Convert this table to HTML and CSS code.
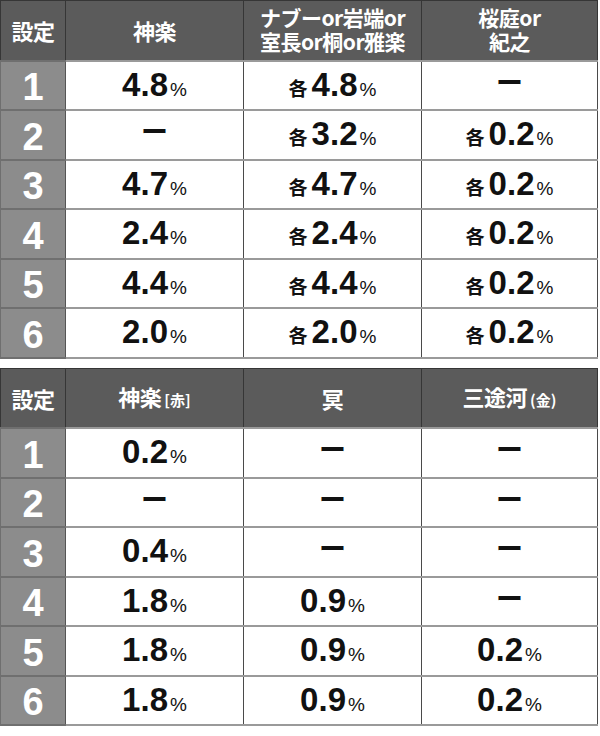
FILE: index.html
```html
<!DOCTYPE html>
<html lang="ja">
<head>
<meta charset="utf-8">
<link rel="stylesheet" href="styles.css">
</head>
<body>
<div class="page">
<table class="tbl">
  <colgroup><col class="c0"><col class="c1"><col class="c2"><col class="c3"></colgroup>
  <thead>
    <tr><th>設定</th><th>神楽</th><th class="two">ナブーor岩端or<br>室長or桐or雅楽</th><th class="two">桜庭or<br>紀之</th></tr>
  </thead>
  <tbody>
    <tr><th>1</th><td><span class="n">4.8</span><span class="p">%</span></td><td><span class="k">各</span><span class="n">4.8</span><span class="p">%</span></td><td><span class="dash">ー</span></td></tr>
    <tr><th>2</th><td><span class="dash">ー</span></td><td><span class="k">各</span><span class="n">3.2</span><span class="p">%</span></td><td><span class="k">各</span><span class="n">0.2</span><span class="p">%</span></td></tr>
    <tr><th>3</th><td><span class="n">4.7</span><span class="p">%</span></td><td><span class="k">各</span><span class="n">4.7</span><span class="p">%</span></td><td><span class="k">各</span><span class="n">0.2</span><span class="p">%</span></td></tr>
    <tr><th>4</th><td><span class="n">2.4</span><span class="p">%</span></td><td><span class="k">各</span><span class="n">2.4</span><span class="p">%</span></td><td><span class="k">各</span><span class="n">0.2</span><span class="p">%</span></td></tr>
    <tr><th>5</th><td><span class="n">4.4</span><span class="p">%</span></td><td><span class="k">各</span><span class="n">4.4</span><span class="p">%</span></td><td><span class="k">各</span><span class="n">0.2</span><span class="p">%</span></td></tr>
    <tr><th>6</th><td><span class="n">2.0</span><span class="p">%</span></td><td><span class="k">各</span><span class="n">2.0</span><span class="p">%</span></td><td><span class="k">各</span><span class="n">0.2</span><span class="p">%</span></td></tr>
  </tbody>
</table>

<table class="tbl second">
  <colgroup><col class="c0"><col class="c1"><col class="c2"><col class="c3"></colgroup>
  <thead>
    <tr><th>設定</th><th>神楽<span class="sm">[赤]</span></th><th>冥</th><th>三途河<span class="sm">(金)</span></th></tr>
  </thead>
  <tbody>
    <tr><th>1</th><td><span class="n">0.2</span><span class="p">%</span></td><td><span class="dash">ー</span></td><td><span class="dash">ー</span></td></tr>
    <tr><th>2</th><td><span class="dash">ー</span></td><td><span class="dash">ー</span></td><td><span class="dash">ー</span></td></tr>
    <tr><th>3</th><td><span class="n">0.4</span><span class="p">%</span></td><td><span class="dash">ー</span></td><td><span class="dash">ー</span></td></tr>
    <tr><th>4</th><td><span class="n">1.8</span><span class="p">%</span></td><td><span class="n">0.9</span><span class="p">%</span></td><td><span class="dash">ー</span></td></tr>
    <tr><th>5</th><td><span class="n">1.8</span><span class="p">%</span></td><td><span class="n">0.9</span><span class="p">%</span></td><td><span class="n">0.2</span><span class="p">%</span></td></tr>
    <tr><th>6</th><td><span class="n">1.8</span><span class="p">%</span></td><td><span class="n">0.9</span><span class="p">%</span></td><td><span class="n">0.2</span><span class="p">%</span></td></tr>
  </tbody>
</table>
</div>
</body>
</html>
```

FILE: styles.css
```css
html, body {
  margin: 0;
  padding: 0;
  background: #ffffff;
}

.page {
  width: 597px;
}

.tbl {
  width: 597px;
  border-collapse: collapse;
  table-layout: fixed;
}

.second {
  margin-top: 9px;
}

.c0 { width: 65px; }
.c1 { width: 178px; }
.c2 { width: 178px; }
.c3 { width: 176px; }

.tbl thead tr {
  height: 60px;
}

.tbl tbody tr {
  height: 49.5px;
}

.tbl thead th {
  background: #5b5b5b;
  color: #ffffff;
  border: 1px solid #363636;
  padding: 0;
  text-align: center;
  vertical-align: middle;
  font-family: "Noto Sans CJK JP", sans-serif;
  font-weight: 700;
  font-size: 22px;
  line-height: 24px;
  letter-spacing: -0.5px;
}

.tbl thead th.two {
  font-size: 21px;
  line-height: 24px;
  padding-bottom: 2px;
}

.sm {
  font-size: 15px;
  margin-left: 3px;
  letter-spacing: 0;
}

.tbl tbody th {
  background: #8c8c8c;
  color: #ffffff;
  border-top: 2px solid #6f6f6f;
  border-bottom: 2px solid #6f6f6f;
  border-left: 1px solid #6f6f6f;
  border-right: 1px solid #555555;
  padding: 4px 0 0;
  text-align: center;
  vertical-align: middle;
  font-family: "Liberation Sans", Arial, sans-serif;
  font-weight: 700;
  font-size: 38px;
  line-height: 40px;
}

.tbl tbody td {
  background: #ffffff;
  border-top: 2px solid #9a9a9a;
  border-bottom: 2px solid #9a9a9a;
  border-left: 1px solid #4a4a4a;
  border-right: 1px solid #4a4a4a;
  padding: 5px 0 0;
  text-align: center;
  vertical-align: middle;
  color: #111111;
  line-height: 36px;
  white-space: nowrap;
}

.n {
  font-family: "Liberation Sans", Arial, sans-serif;
  font-weight: 700;
  font-size: 33px;
}

.p {
  font-family: "Liberation Sans", Arial, sans-serif;
  font-weight: 400;
  font-size: 19px;
  margin-left: 2px;
}

.k {
  font-family: "Noto Sans CJK JP", sans-serif;
  font-weight: 700;
  font-size: 19px;
  margin-right: 4px;
}

.dash {
  font-family: "Noto Sans CJK JP", sans-serif;
  font-weight: 700;
  font-size: 27px;
  position: relative;
  top: -3px;
}
```
